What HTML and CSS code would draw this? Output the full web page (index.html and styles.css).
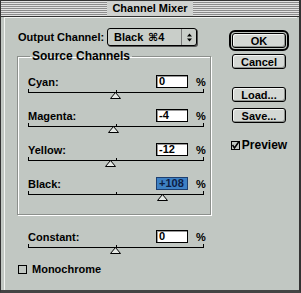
FILE: index.html
```html
<!DOCTYPE html>
<html lang="en">

<head>
  <meta charset="UTF-8">
  <meta name="viewport" content="width=device-width, initial-scale=1.0">
  <title>Channel Mixer</title>
  <link rel="stylesheet" href="styles.css">
</head>

<body>

  <div class="window">
    <div class="titlebar">
      <span class="title">Channel Mixer</span>
    </div>

    <div class="content">
      <div class="main">

        <div class="output-row">
          <span class="output-label">Output Channel:</span>
          <div class="popup">
            <span class="popup-text">Black</span>
            <span class="popup-key">⌘4</span>
            <span class="popup-arrows">
              <svg width="7" height="9" viewBox="0 0 7 9">
                <path d="M3.5 0.5 L6 3.5 H1 Z M3.5 8.5 L6 5.5 H1 Z" fill="#000" />
              </svg>
            </span>
          </div>
        </div>

        <fieldset class="group">
          <legend class="group-title">Source Channels</legend>

          <div class="channel">
            <div class="value-row">
              <span class="label">Cyan:</span>
              <span class="field">0</span>
              <span class="pct">%</span>
            </div>
            <div class="slider">
              <div class="track"></div>
              <svg class="thumb" style="left: 82px" width="11" height="7" viewBox="0 0 11 7">
                <path d="M5.5 0.5 L10.5 6.5 H0.5 Z" fill="#e4e8e4" stroke="#000" />
              </svg>
            </div>
          </div>

          <div class="channel">
            <div class="value-row">
              <span class="label">Magenta:</span>
              <span class="field">-4</span>
              <span class="pct">%</span>
            </div>
            <div class="slider">
              <div class="track"></div>
              <svg class="thumb" style="left: 80px" width="11" height="7" viewBox="0 0 11 7">
                <path d="M5.5 0.5 L10.5 6.5 H0.5 Z" fill="#e4e8e4" stroke="#000" />
              </svg>
            </div>
          </div>

          <div class="channel">
            <div class="value-row">
              <span class="label">Yellow:</span>
              <span class="field">-12</span>
              <span class="pct">%</span>
            </div>
            <div class="slider">
              <div class="track"></div>
              <svg class="thumb" style="left: 77px" width="11" height="7" viewBox="0 0 11 7">
                <path d="M5.5 0.5 L10.5 6.5 H0.5 Z" fill="#e4e8e4" stroke="#000" />
              </svg>
            </div>
          </div>

          <div class="channel">
            <div class="value-row">
              <span class="label">Black:</span>
              <span class="field selected">+108</span>
              <span class="pct">%</span>
            </div>
            <div class="slider">
              <div class="track"></div>
              <svg class="thumb" style="left: 129px" width="11" height="7" viewBox="0 0 11 7">
                <path d="M5.5 0.5 L10.5 6.5 H0.5 Z" fill="#e4e8e4" stroke="#000" />
              </svg>
            </div>
          </div>
        </fieldset>

        <div class="channel constant">
          <div class="value-row">
            <span class="label">Constant:</span>
            <span class="field">0</span>
            <span class="pct">%</span>
          </div>
          <div class="slider">
            <div class="track"></div>
            <svg class="thumb" style="left: 82px" width="11" height="7" viewBox="0 0 11 7">
              <path d="M5.5 0.5 L10.5 6.5 H0.5 Z" fill="#e4e8e4" stroke="#000" />
            </svg>
          </div>
        </div>

        <div class="check-row mono">
          <span class="checkbox"></span>
          <span>Monochrome</span>
        </div>
      </div>

      <!-- 右側のボタン -->
      <div class="buttons">
        <div class="default-ring">
          <button class="btn">OK</button>
        </div>
        <button class="btn cancel">Cancel</button>
        <button class="btn load">Load...</button>
        <button class="btn save">Save...</button>

        <div class="check-row preview">
          <span class="checkbox">
            <svg width="9" height="9" viewBox="0 0 9 9">
              <path d="M1.5 4 L3.5 7 L8 0.5" fill="none" stroke="#000" stroke-width="1.5" />
            </svg>
          </span>
          <span>Preview</span>
        </div>
      </div>
    </div>
  </div>

</body>
</html>
```

FILE: styles.css
```css
body {
  margin: 0;
  font-family: "Liberation Sans", "DejaVu Sans", sans-serif;
  font-size: 11px;
  font-weight: bold;
  color: #000;
}

.window {
  width: 301px;
  height: 293px;
  box-sizing: border-box;
  background: #c1c7c2;
  border: 1px solid #333;
  border-right-width: 2px;
  border-bottom: 3px solid #444;
  display: flex;
  flex-direction: column;
}

/* タイトルバー（縞模様） */
.titlebar {
  height: 15px;
  border-bottom: 1px solid #333;
  background: repeating-linear-gradient(#e2e2e2 0 1px, #8c8c8c 1px 2px);
  display: flex;
  justify-content: center;
}

.title {
  background: #cfd1cf;
  padding: 0 5px;
  line-height: 15px;
  font-size: 11px;
}

.content {
  flex: 1;
  display: flex;
  border-top: 1px solid #f2f4f2;
  border-left: 1px solid #f2f4f2;
  margin: 0 2px 0 3px;
}

.main {
  width: 194px;
  padding-left: 12px;
}

.output-row {
  display: flex;
  align-items: center;
  margin-top: 10px;
  padding-left: 1px;
}

.output-label {
  width: 89px;
}

.popup {
  width: 88px;
  height: 16px;
  border: 1px solid #000;
  border-radius: 3px;
  box-shadow: 1px 1px 0 #555;
  background: #c9cec9;
  display: flex;
  align-items: center;
}

.popup-text {
  padding-left: 6px;
  width: 34px;
}

.popup-key {
  flex: 1;
}

.popup-arrows {
  width: 14px;
  height: 16px;
  border-left: 1px solid #777;
  display: flex;
  align-items: center;
  justify-content: center;
}

/* グループボックス */
.group {
  margin: 4px 0 0;
  padding: 12px 6px 12px 10px;
  border: 1px solid #8c908c;
  box-shadow: 1px 1px 0 #fff, inset 1px 1px 0 #fff;
}

.group-title {
  padding: 0 2px;
  margin-left: 2px;
  font-size: 12px;
  line-height: 13px;
}

.channel {
  width: 176px;
  margin-bottom: 9px;
}

.channel:last-child {
  margin-bottom: 0;
}

.value-row {
  display: flex;
  align-items: center;
  height: 13px;
}

.label {
  flex: 1;
}

.field {
  width: 28px;
  height: 11px;
  line-height: 11px;
  padding-left: 2px;
  background: #fff;
  border: 1px solid #000;
  box-shadow: inset 1px 1px 0 #999;
  font-size: 11px;
}

.field.selected {
  background: #3d80c4;
  border-color: #1d3f70;
  color: #0c1c44;
  box-shadow: none;
}

.pct {
  width: 8px;
  margin-left: 8px;
}

.slider {
  position: relative;
  height: 12px;
}

/* スライダーの目盛り */
.track {
  height: 4px;
  border-bottom: 1px solid #000;
  background:
    linear-gradient(#000, #000) left bottom / 1px 3px no-repeat,
    linear-gradient(#000, #000) 88px bottom / 1px 2px no-repeat,
    linear-gradient(#000, #000) right bottom / 1px 3px no-repeat;
}

.thumb {
  position: absolute;
  top: 4px;
}

.constant {
  margin: 15px 0 0 11px;
}

.check-row {
  display: flex;
  align-items: center;
  gap: 5px;
}

.checkbox {
  width: 9px;
  height: 9px;
  border: 1px solid #000;
  box-sizing: border-box;
  display: flex;
}

.checkbox svg {
  margin: -1px;
}

.mono {
  margin-top: 8px;
  padding-left: 1px;
}

/* ボタン */
.buttons {
  margin-left: 18px;
  width: 60px;
  display: flex;
  flex-direction: column;
  align-items: center;
  padding-top: 12px;
}

.default-ring {
  border: 2px solid #000;
  border-radius: 6px;
  padding: 1px;
  display: flex;
}

.btn {
  width: 54px;
  height: 15px;
  padding: 0;
  border: 1px solid #000;
  border-radius: 3px;
  background: #d4d8d4;
  box-shadow: inset -1px -1px 0 #8e928e, inset 1px 1px 0 #f4f6f4;
  font-family: inherit;
  font-size: 11px;
  font-weight: bold;
  color: #000;
}

.cancel {
  margin-top: 3px;
}

.load {
  margin-top: 18px;
}

.save {
  margin-top: 6px;
}

.preview {
  margin-top: 15px;
  gap: 2px;
  font-size: 12px;
}
```
